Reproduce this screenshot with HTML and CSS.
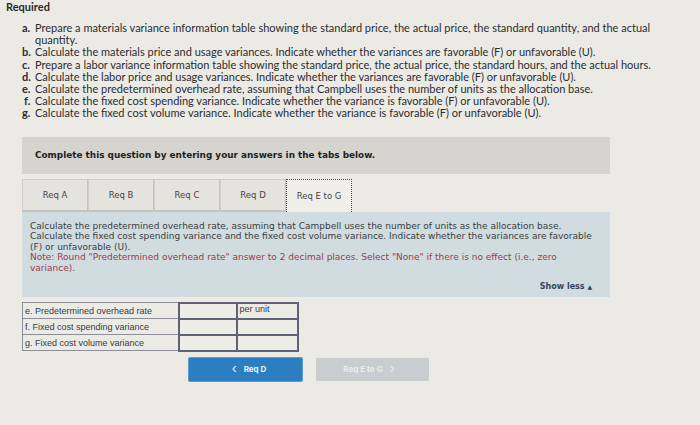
FILE: index.html
```html
<!DOCTYPE html>
<html>
<head>
<meta charset="utf-8">
<link rel="stylesheet" href="styles.css">
</head>
<body>
<div class="page">
  <div class="req-title">Required</div>
  <ul class="req-list">
    <li><span class="ltr">a.</span><span>Prepare a materials variance information table showing the standard price, the actual price, the standard quantity, and the actual quantity.</span></li>
    <li><span class="ltr">b.</span><span>Calculate the materials price and usage variances. Indicate whether the variances are favorable (F) or unfavorable (U).</span></li>
    <li><span class="ltr">c.</span><span>Prepare a labor variance information table showing the standard price, the actual price, the standard hours, and the actual hours.</span></li>
    <li><span class="ltr">d.</span><span>Calculate the labor price and usage variances. Indicate whether the variances are favorable (F) or unfavorable (U).</span></li>
    <li><span class="ltr">e.</span><span>Calculate the predetermined overhead rate, assuming that Campbell uses the number of units as the allocation base.</span></li>
    <li><span class="ltr ltr-f">f.</span><span>Calculate the fixed cost spending variance. Indicate whether the variance is favorable (F) or unfavorable (U).</span></li>
    <li><span class="ltr">g.</span><span>Calculate the fixed cost volume variance. Indicate whether the variance is favorable (F) or unfavorable (U).</span></li>
  </ul>

  <div class="work">
    <div class="instr">Complete this question by entering your answers in the tabs below.</div>
    <div class="tabs">
      <div class="tab">Req A</div>
      <div class="tab">Req B</div>
      <div class="tab">Req C</div>
      <div class="tab">Req D</div>
      <div class="tab tab-active">Req E to G</div>
    </div>
    <div class="panel">
      <p class="q">Calculate the predetermined overhead rate, assuming that Campbell uses the number of units as the allocation base. Calculate the fixed cost spending variance and the fixed cost volume variance. Indicate whether the variances are favorable (F) or unfavorable (U).</p>
      <p class="note">Note: Round "Predetermined overhead rate" answer to 2 decimal places. Select "None" if there is no effect (i.e., zero variance).</p>
      <div class="show-less">Show less <span class="tri">▲</span></div>
    </div>

    <table class="answers">
      <tr><td class="lbl">e. Predetermined overhead rate</td><td class="inp"></td><td class="unit">per unit</td></tr>
      <tr><td class="lbl">f. Fixed cost spending variance</td><td class="inp"></td><td class="inp"></td></tr>
      <tr><td class="lbl">g. Fixed cost volume variance</td><td class="inp"></td><td class="inp"></td></tr>
    </table>

    <div class="nav">
      <div class="btn btn-prev"><span class="chev">&lsaquo;</span> Req D</div>
      <div class="btn btn-next">Req E to G <span class="chev">&rsaquo;</span></div>
    </div>
  </div>
</div>
</body>
</html>
```

FILE: styles.css
```css
html, body {
  margin: 0;
  padding: 0;
  background: #ebeae5;
}
.page {
  width: 700px;
  height: 425px;
  padding: 0 0 0 6px;
  box-sizing: border-box;
  color: #2c2d30;
  font-family: "Lato", "Open Sans", sans-serif;
}
.req-title {
  font-weight: 700;
  font-size: 11px;
  line-height: 13px;
  color: #2a2a2a;
}
.req-list {
  list-style: none;
  margin: 9px 0 0 0;
  padding: 0 0 0 16px;
  font-size: 11px;
  line-height: 12.2px;
  width: 640px;
}
.req-list li {
  display: flex;
}
.ltr {
  width: 13px;
  flex: none;
  font-weight: 700;
}
.ltr-f {
  padding-left: 2px;
  box-sizing: border-box;
}
.work {
  margin: 17px 0 0 16px;
  width: 588px;
}
.instr {
  background: #d5d4cf;
  height: 37px;
  display: flex;
  align-items: center;
  padding-left: 13px;
  font-family: "DejaVu Sans", Verdana, sans-serif;
  font-weight: 700;
  font-size: 8.9px;
  color: #1e1e1e;
}
.tabs {
  display: flex;
  margin-top: 5px;
  height: 33px;
}
.tab {
  width: 66px;
  box-sizing: border-box;
  border: 1px solid #cfcfcb;
  border-right: 1px solid #c3c3bf;
  border-bottom: 2px solid #bfc3c4;
  background: #e4e3de;
  display: flex;
  align-items: center;
  justify-content: center;
  font-family: "DejaVu Sans", Verdana, sans-serif;
  font-size: 8.5px;
  color: #454545;
}
.tab-active {
  background: #efeee9;
  border: 1px dotted #4a4a55;
  border-bottom: none;
}
.panel {
  background: #d0dcdf;
  height: 85px;
  box-sizing: border-box;
  padding: 9px 8px 4px 8px;
  font-family: "DejaVu Sans", Verdana, sans-serif;
  font-size: 9px;
  line-height: 10.6px;
  color: #3a3c40;
  display: flex;
  flex-direction: column;
}
.panel p {
  margin: 0;
}
.note {
  color: #a03a4f;
}
.show-less {
  margin-top: auto;
  align-self: flex-end;
  font-weight: 700;
  color: #34455c;
  font-size: 8px;
  padding-right: 10px;
}
.tri {
  font-size: 6px;
}
.answers {
  margin-top: 5px;
  border-collapse: collapse;
  font-family: "Liberation Sans", Arial, sans-serif;
  font-size: 9px;
  color: #3a3c44;
}
.answers td {
  height: 16px;
  padding: 0 0 0 2px;
  box-sizing: border-box;
}
.lbl {
  width: 156px;
  border: 1px solid #8d8f96;
}
.inp {
  width: 58px;
  border: 2px solid #5d6274;
  background: #edece7;
}
.unit {
  width: 61px;
  border: 2px solid #5d6274;
  vertical-align: top;
}
.answers tr td:last-child {
  width: 61px;
}
.nav {
  display: flex;
  gap: 14px;
  margin: 6px 0 0 167px;
}
.btn {
  width: 113px;
  height: 23px;
  display: flex;
  align-items: center;
  justify-content: center;
  font-family: "Inter", "DejaVu Sans", sans-serif;
  font-weight: 700;
  font-size: 8px;
  border-radius: 1px;
}
.btn-prev {
  background: #2d7dc2;
  color: #eef4fa;
  box-shadow: 0 0 0 1px #5b9bd0;
}
.btn-next {
  background: #c9cdd0;
  color: #e9ecee;
}
.chev {
  font-size: 13px;
  font-weight: 400;
  margin: 0 7px;
  line-height: 1;
  position: relative;
  top: -1px;
}
```
